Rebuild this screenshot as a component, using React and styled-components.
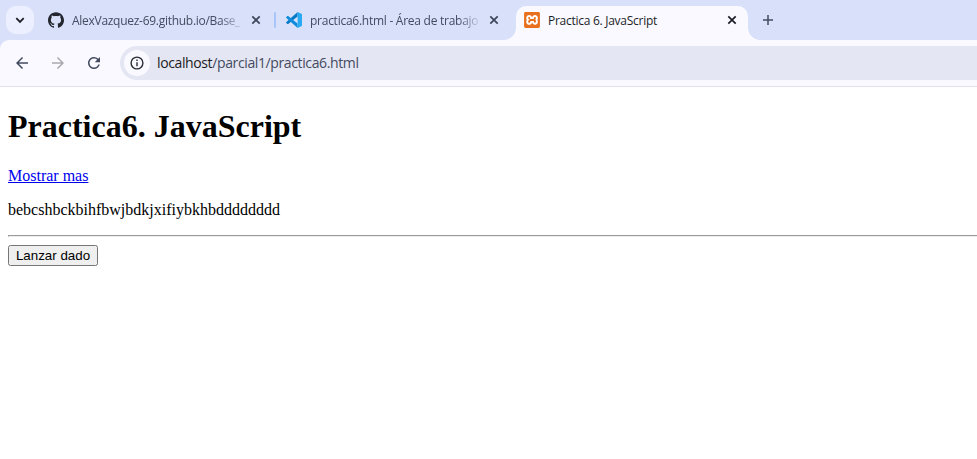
import React from "react";
import styled, { createGlobalStyle } from "styled-components";
import { SiXampp, SiGithub } from "react-icons/si";
import { MdArrowBack, MdArrowForward, MdRefresh } from "react-icons/md";

const Global = createGlobalStyle`
  * { box-sizing: border-box; }
  body { margin: 0; background: #fff; overflow: hidden; }
`;
const Browser = styled.div`
  height: 459px;
  display: flex;
  flex-direction: column;
  background: #fff;
`;
const TabStrip = styled.div`
  flex: none;
  height: 40px;
  display: flex;
  align-items: flex-start;
  padding: 6px 0 0 6px;
  background: #d9e1fa;
`;
const TabSearch = styled.button`
  width: 28px;
  height: 28px;
  padding: 0;
  border: 0;
  border-radius: 10px;
  background: #ecefff;
  display: grid;
  place-items: center;
`;
const Tab = styled.div`
  position: relative;
  flex: none;
  width: ${(p) => p.$width}px;
  height: 34px;
  margin-left: ${(p) => p.$gap}px;
  padding: 0 10px 6px 8px;
  display: flex;
  align-items: center;
  border-radius: 10px 10px 0 0;
  color: ${(p) => (p.$active ? "#1d1e26" : "#444a60")};
  background: ${(p) => (p.$active ? "#f9f9ff" : "transparent")};
  ${(p) => p.$active && `
    &::before, &::after {
      content: "";
      position: absolute;
      bottom: 0;
      width: 12px;
      height: 12px;
    }
    &::before { left: -12px; background: radial-gradient(circle at 0 0, transparent 11.5px, #f9f9ff 12.2px); }
    &::after { right: -12px; background: radial-gradient(circle at 100% 0, transparent 11.5px, #f9f9ff 12.2px); }
  `}
`;
const TabIcon = styled.span`
  display: flex;
  flex: none;
  width: 16px;
  height: 16px;
  margin-right: 8px;
  border-radius: 2px;
  color: ${(p) => p.$color};
  background: ${(p) => p.$bg || "transparent"};
`;
const TabTitle = styled.span`
  flex: none;
  width: 168px;
  padding-top: 2px;
  white-space: nowrap;
  font: 12px/18px "Open Sans", "Noto Sans", sans-serif;
  letter-spacing: ${(p) => p.$spacing}px;
  ${(p) => p.$fade && "mask-image: linear-gradient(to right, #000 148px, transparent 172px);"}
`;
const Close = styled.span`
  display: flex;
  flex: none;
  margin-left: 10px;
  color: ${(p) => (p.$active ? "#1d1e26" : "#3d4358")};
`;
const Separator = styled.span`
  width: 2px;
  height: 16px;
  margin: 6px 0 0 2px;
  border-radius: 1px;
  background: #a9c6fb;
`;
const NewTab = styled.span`
  display: flex;
  margin: 8px 0 0 14px;
`;
const Toolbar = styled.div`
  flex: none;
  height: 47px;
  display: flex;
  align-items: center;
  padding-left: 13px;
  background: #f9f9ff;
  border-bottom: 1px solid #e1e1ec;
`;
const ToolbarBack = styled.div`
  background: #d9e1fa;
  ${Toolbar} { border-top-left-radius: 9px; }
`;
const Nav = styled.span`
  display: flex;
  margin-right: 18px;
  color: ${(p) => (p.$muted ? "#a9a9b0" : "#434b60")};
`;
const Address = styled.div`
  flex: 1;
  height: 34px;
  margin-left: -1px;
  padding-left: 4px;
  display: flex;
  align-items: center;
  border-radius: 17px 0 0 17px;
  background: #e4e7f3;
`;
const SiteInfo = styled.span`
  width: 26px;
  height: 26px;
  border-radius: 50%;
  display: grid;
  place-items: center;
  background: #f9f9ff;
`;
const Url = styled.span`
  margin-left: 7px;
  font: 14px/20px "Open Sans", "Noto Sans", sans-serif;
  letter-spacing: -0.38px;
  color: #444a60;
  white-space: nowrap;
`;
const Host = styled.span`
  color: #1b1b22;
`;
const Page = styled.main`
  flex: 1;
  padding: 21px 0 0 8px;
  font: 16px/18px "Liberation Serif", serif;
  color: #000;
`;
const Heading = styled.h1`
  margin: 0 0 22px;
  font-size: 32px;
  line-height: 37px;
`;
const More = styled.a`
  display: block;
  width: max-content;
  color: #0000ee;
  text-decoration: underline;
`;
const Paragraph = styled.p`
  margin: 16px 0;
`;
const Rule = styled.hr`
  margin: 0 0 8px;
  border: 0;
  border-top: 1px solid #9a9a9a;
  border-left: 1px solid #9a9a9a;
  border-bottom: 1px solid #eeeeee;
`;
const Roll = styled.button`
  display: block;
  width: 90px;
  height: 21px;
  padding: 0;
  border: 1px solid #767676;
  border-radius: 2.5px;
  background: #efefef;
  color: #000;
  font: 13.333px/17px "Liberation Sans", Arial, sans-serif;
  white-space: nowrap;
`;

const Cross = () => (
  <svg width="12" height="12" viewBox="0 0 12 12" fill="none" stroke="currentColor" strokeWidth="1.7">
    <path d="M2.3 2.3 9.7 9.7M9.7 2.3 2.3 9.7" />
  </svg>
);
const CodeLogo = () => (
  <svg width="16" height="16" viewBox="0 0 16 16">
    <path fill="#0879c4" d="M11.6 0v4.6L2.2 11.9a.8.8 0 0 1-.9 0l-.9-.8a.7.7 0 0 1 0-1z" />
    <path fill="#0f8cdb" d="M11.6 16v-4.6L2.2 4.1a.8.8 0 0 0-.9 0l-.9.8a.7.7 0 0 0 0 1z" />
    <path fill="#27aaf2" d="M11.6 0 15.4 1.8a1 1 0 0 1 .6.9v10.6a1 1 0 0 1-.6.9L11.6 16z" />
  </svg>
);

export default function App() {
  return (
    <Browser>
      <Global />
      <TabStrip>
        <TabSearch aria-label="Tabs">
          <svg width="10" height="10" viewBox="0 0 10 10" fill="none" stroke="#1d1e26" strokeWidth="1.8">
            <path d="M1.3 3.2 5 6.9l3.7-3.7" />
          </svg>
        </TabSearch>
        <Tab $width={232} $gap={6}>
          <TabIcon $color="#23262e"><SiGithub size={16} /></TabIcon>
          <TabTitle $fade $spacing={-0.28}>AlexVazquez-69.github.io/Base_</TabTitle>
          <Close><Cross /></Close>
        </Tab>
        <Separator />
        <Tab $width={232} $gap={2}>
          <TabIcon><CodeLogo /></TabIcon>
          <TabTitle $fade $spacing={-0.26}>practica6.html - Área de trabajo</TabTitle>
          <Close><Cross /></Close>
        </Tab>
        <Tab $active $width={232} $gap={6}>
          <TabIcon $color="#e8701f" $bg="#fff"><SiXampp size={16} /></TabIcon>
          <TabTitle $spacing={-0.27}>Practica 6. JavaScript</TabTitle>
          <Close $active><Cross /></Close>
        </Tab>
        <NewTab>
          <svg width="12" height="12" viewBox="0 0 12 12" stroke="#434b60" strokeWidth="1.5">
            <path d="M6 1v10M1 6h10" />
          </svg>
        </NewTab>
      </TabStrip>
      <ToolbarBack>
        <Toolbar>
          <Nav><MdArrowBack size={18} /></Nav>
          <Nav $muted><MdArrowForward size={18} /></Nav>
          <Nav><MdRefresh size={18} /></Nav>
          <Address>
            <SiteInfo>
              <svg width="14" height="14" viewBox="0 0 14 14" fill="none" stroke="#2b2d36" strokeWidth="1.4">
                <circle cx="7" cy="7" r="5.9" />
                <path d="M7 6.2v4M7 3.6v1.5" />
              </svg>
            </SiteInfo>
            <Url><Host>localhost</Host>/parcial1/practica6.html</Url>
          </Address>
        </Toolbar>
      </ToolbarBack>
      <Page>
        <Heading>Practica6. JavaScript</Heading>
        <More href="#">Mostrar mas</More>
        <Paragraph>bebcshbckbihfbwjbdkjxifiybkhbdddddddd</Paragraph>
        <Rule />
        <Roll>Lanzar dado</Roll>
      </Page>
    </Browser>
  );
}
